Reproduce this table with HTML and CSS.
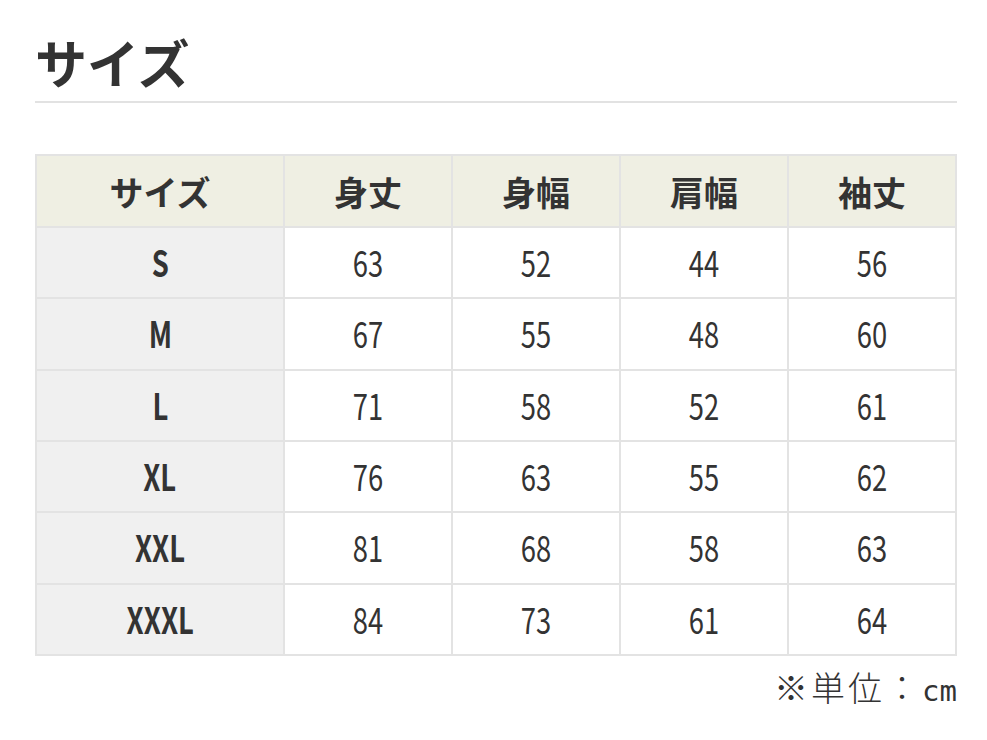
FILE: index.html
```html
<!DOCTYPE html>
<html lang="ja">
<head>
<meta charset="utf-8">
<link rel="stylesheet" href="styles.css">
</head>
<body>
<main class="page">
  <h1 class="title">サイズ</h1>
  <table class="size-table">
    <thead>
      <tr><th>サイズ</th><th>身丈</th><th>身幅</th><th>肩幅</th><th>袖丈</th></tr>
    </thead>
    <tbody>
      <tr><th><span class="n">S</span></th><td><span class="n">63</span></td><td><span class="n">52</span></td><td><span class="n">44</span></td><td><span class="n">56</span></td></tr>
      <tr><th><span class="n">M</span></th><td><span class="n">67</span></td><td><span class="n">55</span></td><td><span class="n">48</span></td><td><span class="n">60</span></td></tr>
      <tr><th><span class="n">L</span></th><td><span class="n">71</span></td><td><span class="n">58</span></td><td><span class="n">52</span></td><td><span class="n">61</span></td></tr>
      <tr><th><span class="n">XL</span></th><td><span class="n">76</span></td><td><span class="n">63</span></td><td><span class="n">55</span></td><td><span class="n">62</span></td></tr>
      <tr><th><span class="n">XXL</span></th><td><span class="n">81</span></td><td><span class="n">68</span></td><td><span class="n">58</span></td><td><span class="n">63</span></td></tr>
      <tr><th><span class="n">XXXL</span></th><td><span class="n">84</span></td><td><span class="n">73</span></td><td><span class="n">61</span></td><td><span class="n">64</span></td></tr>
    </tbody>
  </table>
  <p class="note">※単位：<span class="unit">cm</span></p>
</main>
</body>
</html>
```
FILE: styles.css
```css
html, body { margin: 0; padding: 0; background: #fff; }
body {
  font-family: "Noto Sans CJK JP", "Noto Sans", sans-serif;
  color: #333;
}
.page {
  width: 922px;
  padding: 26px 0 0 35px;
}
.title {
  margin: 0;
  font-size: 52px;
  font-weight: 700;
  line-height: 72px;
  color: #333;
  border-bottom: 2px solid #e2e2e2;
  height: 77px;
  box-sizing: border-box;
}
.size-table {
  margin-top: 51px;
  width: 922px;
  border-collapse: collapse;
  table-layout: fixed;
}
.size-table th, .size-table td {
  border: 2px solid #e3e3e3;
  text-align: center;
  height: 69.33px;
  padding: 0;
}
.size-table thead th {
  background: #efefe3;
  font-size: 34px;
  font-weight: 700;
  height: 70px;
}
.size-table thead th:first-child { width: 246px; }
.size-table tbody th {
  background: #f0f0f0;
  font-weight: 700;
}
.n {
  display: inline-block;
  font-size: 36px;
  transform: scaleX(0.76);
  line-height: 1;
}
.size-table tbody td .n { font-weight: 400; }
.note {
  margin: 10px 0 0;
  text-align: right;
  font-size: 34px;
  line-height: 42px;
  font-weight: 300;
  letter-spacing: 3px;
}
.unit {
  font-family: "DejaVu Sans Mono", monospace;
  font-size: 29px;
  font-weight: 400;
  letter-spacing: 0;
}
```
